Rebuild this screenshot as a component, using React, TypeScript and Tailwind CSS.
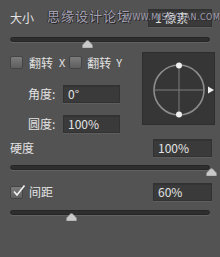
import React from 'react'

const font = { fontFamily: '"Noto Sans CJK SC", "Noto Sans", "Liberation Sans", sans-serif' }

function Field({ value, className = '' }: { value: string; className?: string }) {
  return (
    <div
      className={`flex h-[18px] items-center border border-[#323232] bg-[#3a3a3a] pl-[4px] text-[12px] leading-none text-[#e4e4e4] shadow-[inset_0_1px_0_#333,0_1px_0_#5e5e5e] ${className}`}
    >
      {value}
    </div>
  )
}

function Slider({ pos }: { pos: number }) {
  return (
    <div className="relative h-[5px] w-[200px] rounded-full border border-[#262626] bg-[#2e2e2e] shadow-[0_1px_0_#626262]">
      <div className="absolute top-[2px] h-[8px] w-[11px]" style={{ left: pos - 5.5 }}>
        <svg width="11" height="8" viewBox="0 0 11 8">
          <path d="M4.5 0.8 Q5.5 0 6.5 0.8 L10.5 5 L10.5 8 L0.5 8 L0.5 5 Z" fill="#c9c9c9" stroke="#8c8c8c" strokeWidth="0.6" />
        </svg>
      </div>
    </div>
  )
}

function Box({ checked = false }: { checked?: boolean }) {
  return (
    <div className="relative h-[13px] w-[13px] rounded-[2px] border border-[#444] bg-gradient-to-b from-[#7c7c7c] to-[#5e5e5e]">
      {checked && (
        <svg className="absolute -top-[3px] left-[1px]" width="14" height="14" viewBox="0 0 14 14">
          <path d="M2 7.5 L5 11 L12.5 1.5" fill="none" stroke="#f2f2f2" strokeWidth="1.6" />
        </svg>
      )}
    </div>
  )
}

export default function App() {
  return (
    <div className="relative h-[257px] w-[220px] overflow-hidden bg-[#535353] pl-[10px] text-[#e2e2e2]" style={font}>
      <div className="flex h-[18px] mt-[9px] items-center justify-between pr-[8px]">
        <span className="text-[12px] leading-none">大小</span>
        <Field value="1 像素" className="w-[64px] pl-[6px]" />
      </div>

      <div className="mt-[10px]">
        <Slider pos={76} />
      </div>

      <div className="mt-[14px] flex">
        <div className="flex w-[130px] flex-col">
          <div className="flex h-[13px] items-center text-[12px] leading-none">
            <Box />
            <span className="ml-[6px]">翻转</span>
            <span className="ml-[6px] text-[11px]">X</span>
            <div className="ml-[4px]">
              <Box />
            </div>
            <span className="ml-[5px]">翻转</span>
            <span className="ml-[5px] text-[11px]">Y</span>
          </div>

          <div className="mt-[16px] flex h-[18px] items-center">
            <span className="w-[53px] pl-[18px] text-[12px] leading-none">角度:</span>
            <Field value="0°" className="w-[57px]" />
          </div>
          <div className="mt-[12px] flex h-[18px] items-center">
            <span className="w-[53px] pl-[18px] text-[12px] leading-none">圆度:</span>
            <Field value="100%" className="w-[57px]" />
          </div>
        </div>

        <div className="-mt-[4px] ml-[2px] h-[73px] w-[73px] border border-[#2e2e2e] bg-[#363636]">
          <svg width="73" height="73" viewBox="0 0 73 73">
            <circle cx="36" cy="37" r="25" fill="none" stroke="#8d8d8d" strokeWidth="1.6" />
            <line x1="11" y1="37" x2="61" y2="37" stroke="#7c7c7c" strokeWidth="1" />
            <line x1="36" y1="12" x2="36" y2="62" stroke="#7c7c7c" strokeWidth="1" />
            <circle cx="36" cy="12.5" r="3" fill="#f0f0f0" />
            <circle cx="36" cy="61.5" r="3" fill="#f0f0f0" />
            <path d="M65 33.5 L71 37 L65 40.5 Z" fill="#f0f0f0" />
          </svg>
        </div>
      </div>

      <div className="mt-[6px] flex h-[18px] items-center justify-between pr-[8px]">
        <span className="text-[12px] leading-none">硬度</span>
        <Field value="100%" className="w-[59px]" />
      </div>

      <div className="mt-[8px]">
        <Slider pos={200} />
      </div>

      <div className="mt-[13px] flex h-[18px] items-center justify-between pr-[8px]">
        <div className="flex items-center">
          <Box checked />
          <span className="ml-[6px] text-[12px] leading-none">间距</span>
        </div>
        <Field value="60%" className="w-[59px]" />
      </div>

      <div className="mt-[9px]">
        <Slider pos={60} />
      </div>

      <div
        className="absolute left-[47px] top-[9px] text-[13px] leading-none tracking-[1px] text-[#a19eb0]"
        style={{ textShadow: '1px 1px 0 #2a2a2a, -1px 0 0 #2a2a2a' }}
      >
        思缘设计论坛
      </div>
      <div
        className="absolute left-[124px] top-[14px] text-[8px] leading-none tracking-[0.5px] text-[#a19eb0]"
        style={{ fontFamily: '"DejaVu Sans", sans-serif', textShadow: '1px 1px 0 #2a2a2a' }}
      >
        WWW.MISSYUAN.COM
      </div>
    </div>
  )
}
